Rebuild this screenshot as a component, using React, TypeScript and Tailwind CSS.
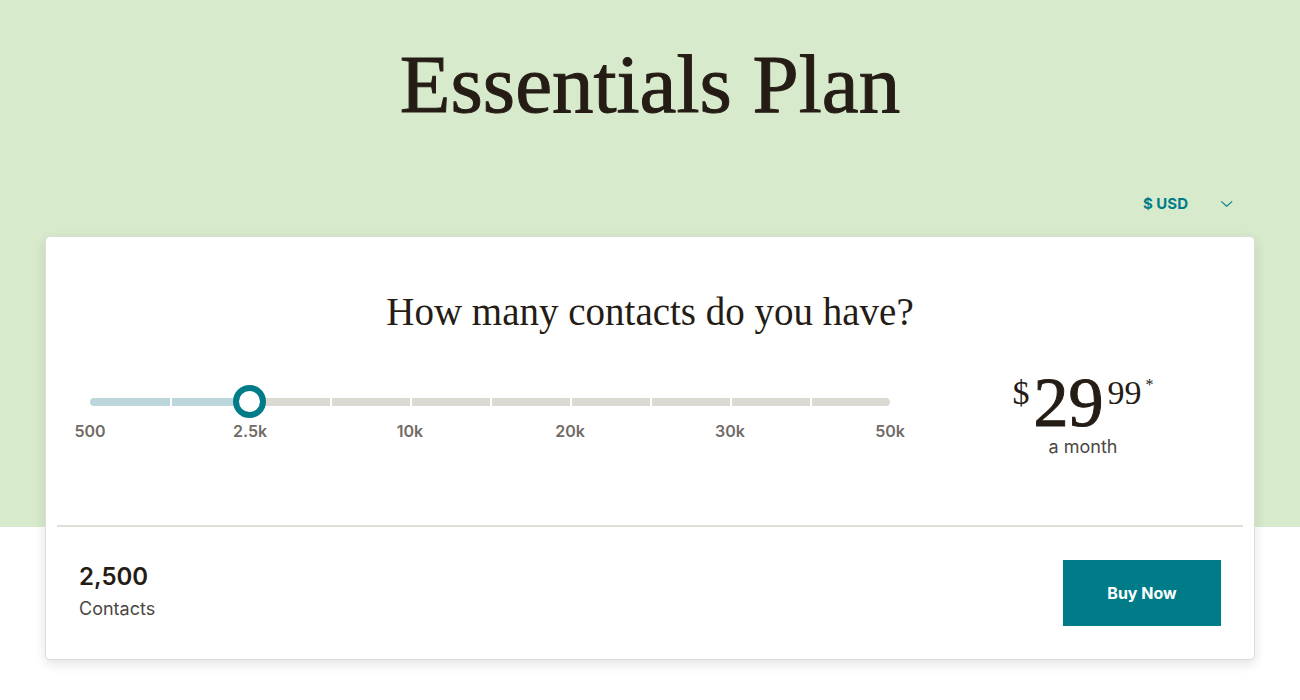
import { useState } from 'react';

const STEPS = [
  { contacts: 500, price: '13.00' },
  { contacts: 1500, price: '26.50' },
  { contacts: 2500, price: '29.99' },
  { contacts: 5000, price: '69.00' },
  { contacts: 10000, price: '100.00' },
  { contacts: 15000, price: '180.00' },
  { contacts: 20000, price: '230.00' },
  { contacts: 25000, price: '270.00' },
  { contacts: 30000, price: '310.00' },
  { contacts: 40000, price: '335.00' },
  { contacts: 50000, price: '385.00' },
];

const LABELS = ['500', '2.5k', '10k', '20k', '30k', '50k'];

function CurrencySelect() {
  return (
    <div className="grid items-center text-[#007c89]">
      <select
        aria-label="Currency"
        className="col-start-1 row-start-1 w-[90px] cursor-pointer appearance-none bg-transparent text-[15px] leading-6 font-bold"
      >
        <option>$ USD</option>
        <option>€ EUR</option>
        <option>£ GBP</option>
      </select>
      <svg
        className="pointer-events-none col-start-1 row-start-1 justify-self-end"
        width="13"
        height="8"
        viewBox="0 0 13 8"
        fill="none"
        stroke="currentColor"
        strokeWidth="1.1"
        aria-hidden="true"
      >
        <path d="M1.2 1.4 6.7 6.2l5.5-4.8" />
      </svg>
    </div>
  );
}

function ContactSlider({ step, onChange }: { step: number; onChange: (step: number) => void }) {
  return (
    <div className="grow px-[33px] pt-4">
      <div className="grid items-center">
        <div className="col-start-1 row-start-1 grid h-2 grid-cols-10 overflow-hidden rounded-full">
          {STEPS.slice(1).map((item, i) => (
            <div
              key={item.contacts}
              className={`border-white ${i > 0 ? 'border-l-2' : ''} ${
                i < step ? 'bg-[#bcd7dc]' : 'bg-[#dbd9d2]'
              }`}
            />
          ))}
        </div>
        <input
          type="range"
          aria-labelledby="contacts-question"
          min={0}
          max={10}
          step={1}
          value={step}
          onChange={(e) => onChange(Number(e.target.value))}
          className="col-start-1 row-start-1 -mx-[17px] h-[33px] cursor-pointer appearance-none bg-transparent [&::-webkit-slider-thumb]:size-[33px] [&::-webkit-slider-thumb]:appearance-none [&::-webkit-slider-thumb]:rounded-full [&::-webkit-slider-thumb]:border-6 [&::-webkit-slider-thumb]:border-[#007c89] [&::-webkit-slider-thumb]:bg-white"
        />
      </div>
      <div className="-mx-5 flex justify-between text-base leading-[26px] font-semibold text-[#716b67]">
        {LABELS.map((label) => (
          <span key={label} className="w-10 text-center">
            {label}
          </span>
        ))}
      </div>
    </div>
  );
}

function Price({ value }: { value: string }) {
  const [whole, cents] = value.split('.');
  return (
    <div className="w-[320px] pt-1 text-center">
      <p className="flex justify-center gap-1 font-['Liberation_Serif',serif]">
        <span className="text-[34px] leading-10">$</span>
        <span className="text-[70px] leading-[60px] [-webkit-text-stroke:1px_currentColor]">{whole}</span>
        <span className="text-[34px] leading-10">{cents}</span>
        <span className="text-base leading-6">*</span>
      </p>
      <p className="mt-0.5 text-lg leading-6 text-[#4c4743]">a month</p>
    </div>
  );
}

export default function App() {
  const [step, setStep] = useState(2);
  const selected = STEPS[step];

  return (
    <main className="min-h-screen bg-white pb-10 font-['Inter',sans-serif] text-[#241c15]">
      <header className="bg-[#d8eacc] px-[67px] pt-[34px] pb-[311px]">
        <h1 className="text-center font-['Liberation_Serif',serif] text-[83px] leading-[100px] [-webkit-text-stroke:1px_currentColor]">
          Essentials Plan
        </h1>
        <div className="mt-[58px] flex justify-end">
          <CurrencySelect />
        </div>
      </header>

      <section className="relative mx-[45px] -mt-[291px] rounded-[5px] border border-[#dedcd5] bg-white px-[11px] shadow-[0_4px_12px_rgba(36,28,21,0.12)]">
        <div className="border-b-2 border-[#dedfd6] pt-[50px] pb-[66px]">
          <h2
            id="contacts-question"
            className="text-center font-['Liberation_Serif',serif] text-[39px] leading-[50px]"
          >
            How many contacts do you have?
          </h2>
          <div className="mt-8 flex items-start">
            <ContactSlider step={step} onChange={setStep} />
            <Price value={selected.price} />
          </div>
        </div>
        <div className="flex items-center justify-between px-[22px] py-[33px]">
          <div>
            <p className="text-2xl leading-8 font-semibold">{selected.contacts.toLocaleString('en-US')}</p>
            <p className="text-lg leading-8 text-[#4c4743]">Contacts</p>
          </div>
          <button
            type="button"
            className="h-[66px] w-[158px] cursor-pointer bg-[#007c89] text-base font-bold text-white"
          >
            Buy Now
          </button>
        </div>
      </section>
    </main>
  );
}
